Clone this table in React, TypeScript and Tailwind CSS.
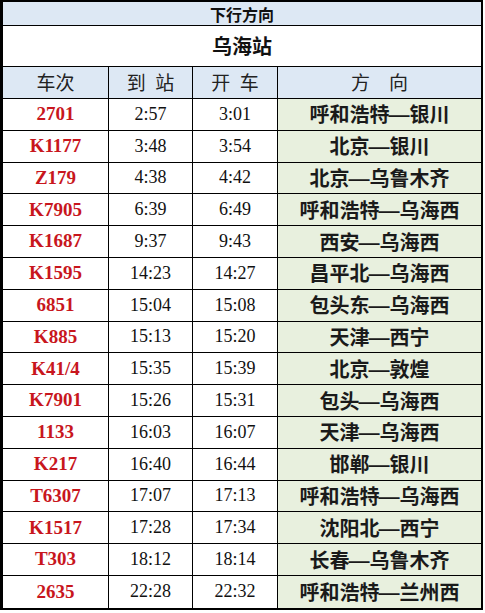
const ROWS = [
  ["2701", "2:57", "3:01", "呼和浩特—银川"],
  ["K1177", "3:48", "3:54", "北京—银川"],
  ["Z179", "4:38", "4:42", "北京—乌鲁木齐"],
  ["K7905", "6:39", "6:49", "呼和浩特—乌海西"],
  ["K1687", "9:37", "9:43", "西安—乌海西"],
  ["K1595", "14:23", "14:27", "昌平北—乌海西"],
  ["6851", "15:04", "15:08", "包头东—乌海西"],
  ["K885", "15:13", "15:20", "天津—西宁"],
  ["K41/4", "15:35", "15:39", "北京—敦煌"],
  ["K7901", "15:26", "15:31", "包头—乌海西"],
  ["1133", "16:03", "16:07", "天津—乌海西"],
  ["K217", "16:40", "16:44", "邯郸—银川"],
  ["T6307", "17:07", "17:13", "呼和浩特—乌海西"],
  ["K1517", "17:28", "17:34", "沈阳北—西宁"],
  ["T303", "18:12", "18:14", "长春—乌鲁木齐"],
  ["2635", "22:28", "22:32", "呼和浩特—兰州西"],
];

const cjk = "font-['Noto_Sans_CJK_SC',sans-serif]";
const serif = "font-['Liberation_Serif','Times_New_Roman',serif]";
const grid = "grid grid-cols-[106px_84px_85px_1fr]";

// the source font draws the dash a full character wide
function Route({ text }: { text: string }) {
  const [from, to] = text.split("—");
  return (
    <>
      {from}
      <span className="mx-[1px] inline-block scale-x-[1.3]">—</span>
      {to}
    </>
  );
}

export default function App() {
  return (
    <div className="h-[613px] w-[485px] bg-white">
      <div className="w-[483px] border-t-2 border-r-2 border-b-2 border-l-[3px] border-black">
        <div
          className={`flex h-[24px] items-center justify-center border-b border-black bg-[#dde8f4] text-[16px] font-bold text-[#111] ${cjk}`}
        >
          下行方向
        </div>
        <div
          className={`flex h-[41px] items-center justify-center border-b border-black text-[20px] font-bold text-[#111] ${cjk}`}
        >
          乌海站
        </div>
        <div className={`${grid} h-[32px] border-b border-black bg-[#dde8f4] text-[19px] text-[#222] ${cjk}`}>
          <div className="flex items-center justify-center border-r border-black">车次</div>
          <div className="flex items-center justify-center border-r border-black">到&ensp;站</div>
          <div className="flex items-center justify-center border-r border-black">开&ensp;车</div>
          <div className="flex items-center justify-center">方&ensp;&ensp;向</div>
        </div>
        {ROWS.map(([no, arr, dep, dir], i) => (
          <div
            key={no}
            className={`${grid} h-[31.8px] ${i < ROWS.length - 1 ? "border-b border-black" : ""}`}
          >
            <div
              className={`flex items-center justify-center border-r border-black text-[19px] font-bold text-[#c8161d] ${serif}`}
            >
              {no}
            </div>
            <div className={`flex items-center justify-center border-r border-black text-[18px] text-[#111] ${serif}`}>
              {arr}
            </div>
            <div className={`flex items-center justify-center border-r border-black text-[18px] text-[#111] ${serif}`}>
              {dep}
            </div>
            <div
              className={`flex items-center justify-center bg-[#e8f0de] text-[20px] font-semibold text-[#1a1a1a] ${cjk}`}
            >
              <Route text={dir} />
            </div>
          </div>
        ))}
      </div>
    </div>
  );
}
